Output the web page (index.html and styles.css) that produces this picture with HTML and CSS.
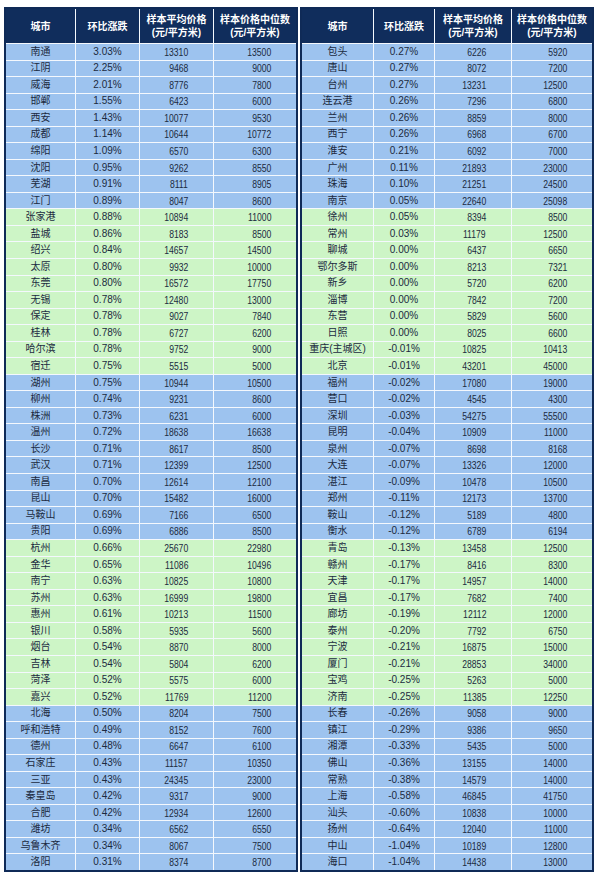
FILE: index.html
```html
<!DOCTYPE html>
<html lang="zh-CN">
<head>
<meta charset="utf-8">
<title>城市房价环比</title>
<link rel="stylesheet" href="styles.css">
</head>
<body>
<div class="page">
  <div class="tbl left">
    <div class="h">城市</div><div class="h">环比涨跌</div><div class="h">样本平均价格<br>(元/平方米)</div><div class="h">样本价格中位数<br>(元/平方米)</div>
    <div class="r b"><div>南通</div><div>3.03%</div><div class="n"><span>13310</span></div><div class="n"><span>13500</span></div></div>
    <div class="r b"><div>江阴</div><div>2.25%</div><div class="n"><span>9468</span></div><div class="n"><span>9000</span></div></div>
    <div class="r b"><div>威海</div><div>2.01%</div><div class="n"><span>8776</span></div><div class="n"><span>7800</span></div></div>
    <div class="r b"><div>邯郸</div><div>1.55%</div><div class="n"><span>6423</span></div><div class="n"><span>6000</span></div></div>
    <div class="r b"><div>西安</div><div>1.43%</div><div class="n"><span>10077</span></div><div class="n"><span>9530</span></div></div>
    <div class="r b"><div>成都</div><div>1.14%</div><div class="n"><span>10644</span></div><div class="n"><span>10772</span></div></div>
    <div class="r b"><div>绵阳</div><div>1.09%</div><div class="n"><span>6570</span></div><div class="n"><span>6300</span></div></div>
    <div class="r b"><div>沈阳</div><div>0.95%</div><div class="n"><span>9262</span></div><div class="n"><span>8550</span></div></div>
    <div class="r b"><div>芜湖</div><div>0.91%</div><div class="n"><span>8111</span></div><div class="n"><span>8905</span></div></div>
    <div class="r b"><div>江门</div><div>0.89%</div><div class="n"><span>8047</span></div><div class="n"><span>8600</span></div></div>
    <div class="r g"><div>张家港</div><div>0.88%</div><div class="n"><span>10894</span></div><div class="n"><span>11000</span></div></div>
    <div class="r g"><div>盐城</div><div>0.86%</div><div class="n"><span>8183</span></div><div class="n"><span>8500</span></div></div>
    <div class="r g"><div>绍兴</div><div>0.84%</div><div class="n"><span>14657</span></div><div class="n"><span>14500</span></div></div>
    <div class="r g"><div>太原</div><div>0.80%</div><div class="n"><span>9932</span></div><div class="n"><span>10000</span></div></div>
    <div class="r g"><div>东莞</div><div>0.80%</div><div class="n"><span>16572</span></div><div class="n"><span>17750</span></div></div>
    <div class="r g"><div>无锡</div><div>0.78%</div><div class="n"><span>12480</span></div><div class="n"><span>13000</span></div></div>
    <div class="r g"><div>保定</div><div>0.78%</div><div class="n"><span>9027</span></div><div class="n"><span>7840</span></div></div>
    <div class="r g"><div>桂林</div><div>0.78%</div><div class="n"><span>6727</span></div><div class="n"><span>6200</span></div></div>
    <div class="r g"><div>哈尔滨</div><div>0.78%</div><div class="n"><span>9752</span></div><div class="n"><span>9000</span></div></div>
    <div class="r g"><div>宿迁</div><div>0.75%</div><div class="n"><span>5515</span></div><div class="n"><span>5000</span></div></div>
    <div class="r b"><div>湖州</div><div>0.75%</div><div class="n"><span>10944</span></div><div class="n"><span>10500</span></div></div>
    <div class="r b"><div>柳州</div><div>0.74%</div><div class="n"><span>9231</span></div><div class="n"><span>8600</span></div></div>
    <div class="r b"><div>株洲</div><div>0.73%</div><div class="n"><span>6231</span></div><div class="n"><span>6000</span></div></div>
    <div class="r b"><div>温州</div><div>0.72%</div><div class="n"><span>18638</span></div><div class="n"><span>16638</span></div></div>
    <div class="r b"><div>长沙</div><div>0.71%</div><div class="n"><span>8617</span></div><div class="n"><span>8500</span></div></div>
    <div class="r b"><div>武汉</div><div>0.71%</div><div class="n"><span>12399</span></div><div class="n"><span>12500</span></div></div>
    <div class="r b"><div>南昌</div><div>0.70%</div><div class="n"><span>12614</span></div><div class="n"><span>12100</span></div></div>
    <div class="r b"><div>昆山</div><div>0.70%</div><div class="n"><span>15482</span></div><div class="n"><span>16000</span></div></div>
    <div class="r b"><div>马鞍山</div><div>0.69%</div><div class="n"><span>7166</span></div><div class="n"><span>6500</span></div></div>
    <div class="r b"><div>贵阳</div><div>0.69%</div><div class="n"><span>6886</span></div><div class="n"><span>8500</span></div></div>
    <div class="r g"><div>杭州</div><div>0.66%</div><div class="n"><span>25670</span></div><div class="n"><span>22980</span></div></div>
    <div class="r g"><div>金华</div><div>0.65%</div><div class="n"><span>11086</span></div><div class="n"><span>10496</span></div></div>
    <div class="r g"><div>南宁</div><div>0.63%</div><div class="n"><span>10825</span></div><div class="n"><span>10800</span></div></div>
    <div class="r g"><div>苏州</div><div>0.63%</div><div class="n"><span>16999</span></div><div class="n"><span>19800</span></div></div>
    <div class="r g"><div>惠州</div><div>0.61%</div><div class="n"><span>10213</span></div><div class="n"><span>11500</span></div></div>
    <div class="r g"><div>银川</div><div>0.58%</div><div class="n"><span>5935</span></div><div class="n"><span>5600</span></div></div>
    <div class="r g"><div>烟台</div><div>0.54%</div><div class="n"><span>8870</span></div><div class="n"><span>8000</span></div></div>
    <div class="r g"><div>吉林</div><div>0.54%</div><div class="n"><span>5804</span></div><div class="n"><span>6200</span></div></div>
    <div class="r g"><div>菏泽</div><div>0.52%</div><div class="n"><span>5575</span></div><div class="n"><span>6000</span></div></div>
    <div class="r g"><div>嘉兴</div><div>0.52%</div><div class="n"><span>11769</span></div><div class="n"><span>11200</span></div></div>
    <div class="r b"><div>北海</div><div>0.50%</div><div class="n"><span>8204</span></div><div class="n"><span>7500</span></div></div>
    <div class="r b"><div>呼和浩特</div><div>0.49%</div><div class="n"><span>8152</span></div><div class="n"><span>7600</span></div></div>
    <div class="r b"><div>德州</div><div>0.48%</div><div class="n"><span>6647</span></div><div class="n"><span>6100</span></div></div>
    <div class="r b"><div>石家庄</div><div>0.43%</div><div class="n"><span>11157</span></div><div class="n"><span>10350</span></div></div>
    <div class="r b"><div>三亚</div><div>0.43%</div><div class="n"><span>24345</span></div><div class="n"><span>23000</span></div></div>
    <div class="r b"><div>秦皇岛</div><div>0.42%</div><div class="n"><span>9317</span></div><div class="n"><span>9000</span></div></div>
    <div class="r b"><div>合肥</div><div>0.42%</div><div class="n"><span>12934</span></div><div class="n"><span>12600</span></div></div>
    <div class="r b"><div>潍坊</div><div>0.34%</div><div class="n"><span>6562</span></div><div class="n"><span>6550</span></div></div>
    <div class="r b"><div>乌鲁木齐</div><div>0.34%</div><div class="n"><span>8067</span></div><div class="n"><span>7500</span></div></div>
    <div class="r b"><div>洛阳</div><div>0.31%</div><div class="n"><span>8374</span></div><div class="n"><span>8700</span></div></div>
  </div>
  <div class="tbl right">
    <div class="h">城市</div><div class="h">环比涨跌</div><div class="h">样本平均价格<br>(元/平方米)</div><div class="h">样本价格中位数<br>(元/平方米)</div>
    <div class="r b"><div>包头</div><div>0.27%</div><div class="n"><span>6226</span></div><div class="n"><span>5920</span></div></div>
    <div class="r b"><div>唐山</div><div>0.27%</div><div class="n"><span>8072</span></div><div class="n"><span>7200</span></div></div>
    <div class="r b"><div>台州</div><div>0.27%</div><div class="n"><span>13231</span></div><div class="n"><span>12500</span></div></div>
    <div class="r b"><div>连云港</div><div>0.26%</div><div class="n"><span>7296</span></div><div class="n"><span>6800</span></div></div>
    <div class="r b"><div>兰州</div><div>0.26%</div><div class="n"><span>8859</span></div><div class="n"><span>8000</span></div></div>
    <div class="r b"><div>西宁</div><div>0.26%</div><div class="n"><span>6968</span></div><div class="n"><span>6700</span></div></div>
    <div class="r b"><div>淮安</div><div>0.21%</div><div class="n"><span>6092</span></div><div class="n"><span>7000</span></div></div>
    <div class="r b"><div>广州</div><div>0.11%</div><div class="n"><span>21893</span></div><div class="n"><span>23000</span></div></div>
    <div class="r b"><div>珠海</div><div>0.10%</div><div class="n"><span>21251</span></div><div class="n"><span>24500</span></div></div>
    <div class="r b"><div>南京</div><div>0.05%</div><div class="n"><span>22640</span></div><div class="n"><span>25098</span></div></div>
    <div class="r g"><div>徐州</div><div>0.05%</div><div class="n"><span>8394</span></div><div class="n"><span>8500</span></div></div>
    <div class="r g"><div>常州</div><div>0.03%</div><div class="n"><span>11179</span></div><div class="n"><span>12500</span></div></div>
    <div class="r g"><div>聊城</div><div>0.00%</div><div class="n"><span>6437</span></div><div class="n"><span>6650</span></div></div>
    <div class="r g"><div>鄂尔多斯</div><div>0.00%</div><div class="n"><span>8213</span></div><div class="n"><span>7321</span></div></div>
    <div class="r g"><div>新乡</div><div>0.00%</div><div class="n"><span>5720</span></div><div class="n"><span>6200</span></div></div>
    <div class="r g"><div>淄博</div><div>0.00%</div><div class="n"><span>7842</span></div><div class="n"><span>7200</span></div></div>
    <div class="r g"><div>东营</div><div>0.00%</div><div class="n"><span>5829</span></div><div class="n"><span>5600</span></div></div>
    <div class="r g"><div>日照</div><div>0.00%</div><div class="n"><span>8025</span></div><div class="n"><span>6600</span></div></div>
    <div class="r g"><div>重庆(主城区)</div><div>-0.01%</div><div class="n"><span>10825</span></div><div class="n"><span>10413</span></div></div>
    <div class="r g"><div>北京</div><div>-0.01%</div><div class="n"><span>43201</span></div><div class="n"><span>45000</span></div></div>
    <div class="r b"><div>福州</div><div>-0.02%</div><div class="n"><span>17080</span></div><div class="n"><span>19000</span></div></div>
    <div class="r b"><div>营口</div><div>-0.02%</div><div class="n"><span>4545</span></div><div class="n"><span>4300</span></div></div>
    <div class="r b"><div>深圳</div><div>-0.03%</div><div class="n"><span>54275</span></div><div class="n"><span>55500</span></div></div>
    <div class="r b"><div>昆明</div><div>-0.04%</div><div class="n"><span>10909</span></div><div class="n"><span>11000</span></div></div>
    <div class="r b"><div>泉州</div><div>-0.07%</div><div class="n"><span>8698</span></div><div class="n"><span>8168</span></div></div>
    <div class="r b"><div>大连</div><div>-0.07%</div><div class="n"><span>13326</span></div><div class="n"><span>12000</span></div></div>
    <div class="r b"><div>湛江</div><div>-0.09%</div><div class="n"><span>10478</span></div><div class="n"><span>10500</span></div></div>
    <div class="r b"><div>郑州</div><div>-0.11%</div><div class="n"><span>12173</span></div><div class="n"><span>13700</span></div></div>
    <div class="r b"><div>鞍山</div><div>-0.12%</div><div class="n"><span>5189</span></div><div class="n"><span>4800</span></div></div>
    <div class="r b"><div>衡水</div><div>-0.12%</div><div class="n"><span>6789</span></div><div class="n"><span>6194</span></div></div>
    <div class="r g"><div>青岛</div><div>-0.13%</div><div class="n"><span>13458</span></div><div class="n"><span>12500</span></div></div>
    <div class="r g"><div>赣州</div><div>-0.17%</div><div class="n"><span>8416</span></div><div class="n"><span>8300</span></div></div>
    <div class="r g"><div>天津</div><div>-0.17%</div><div class="n"><span>14957</span></div><div class="n"><span>14000</span></div></div>
    <div class="r g"><div>宜昌</div><div>-0.17%</div><div class="n"><span>7682</span></div><div class="n"><span>7400</span></div></div>
    <div class="r g"><div>廊坊</div><div>-0.19%</div><div class="n"><span>12112</span></div><div class="n"><span>12000</span></div></div>
    <div class="r g"><div>泰州</div><div>-0.20%</div><div class="n"><span>7792</span></div><div class="n"><span>6750</span></div></div>
    <div class="r g"><div>宁波</div><div>-0.21%</div><div class="n"><span>16875</span></div><div class="n"><span>15000</span></div></div>
    <div class="r g"><div>厦门</div><div>-0.21%</div><div class="n"><span>28853</span></div><div class="n"><span>34000</span></div></div>
    <div class="r g"><div>宝鸡</div><div>-0.25%</div><div class="n"><span>5263</span></div><div class="n"><span>5000</span></div></div>
    <div class="r g"><div>济南</div><div>-0.25%</div><div class="n"><span>11385</span></div><div class="n"><span>12250</span></div></div>
    <div class="r b"><div>长春</div><div>-0.26%</div><div class="n"><span>9058</span></div><div class="n"><span>9000</span></div></div>
    <div class="r b"><div>镇江</div><div>-0.29%</div><div class="n"><span>9386</span></div><div class="n"><span>9650</span></div></div>
    <div class="r b"><div>湘潭</div><div>-0.33%</div><div class="n"><span>5435</span></div><div class="n"><span>5000</span></div></div>
    <div class="r b"><div>佛山</div><div>-0.36%</div><div class="n"><span>13155</span></div><div class="n"><span>14000</span></div></div>
    <div class="r b"><div>常熟</div><div>-0.38%</div><div class="n"><span>14579</span></div><div class="n"><span>14000</span></div></div>
    <div class="r b"><div>上海</div><div>-0.58%</div><div class="n"><span>46845</span></div><div class="n"><span>41750</span></div></div>
    <div class="r b"><div>汕头</div><div>-0.60%</div><div class="n"><span>10838</span></div><div class="n"><span>10000</span></div></div>
    <div class="r b"><div>扬州</div><div>-0.64%</div><div class="n"><span>12040</span></div><div class="n"><span>11000</span></div></div>
    <div class="r b"><div>中山</div><div>-1.04%</div><div class="n"><span>10189</span></div><div class="n"><span>12800</span></div></div>
    <div class="r b"><div>海口</div><div>-1.04%</div><div class="n"><span>14438</span></div><div class="n"><span>13000</span></div></div>
  </div>
</div>
</body>
</html>
```
FILE: styles.css
```css
html, body {
  margin: 0;
  padding: 0;
  background: #ffffff;
}
body {
  font-family: "Liberation Sans", "Noto Sans CJK SC", sans-serif;
  color: #1b2a40;
}
.page {
  display: flex;
  gap: 2px;
  padding: 7px 0 0 4px;
}
.tbl {
  display: grid;
  grid-template-rows: 34px repeat(50, 1fr);
  gap: 1px;
  width: 294px;
  height: 865px;
  box-sizing: border-box;
  border: 2px solid #0f2a57;
  background: #f4f8fd;
}
.left {
  grid-template-columns: 69px 63px 73px 82px;
}
.right {
  grid-template-columns: 71px 60px 76px 80px;
}
.h {
  background: #102d5c;
  color: #ffffff;
  font-weight: bold;
  font-size: 10px;
  line-height: 13px;
  display: flex;
  align-items: center;
  justify-content: center;
  text-align: center;
  white-space: nowrap;
}
.r {
  display: contents;
}
.r > div {
  display: flex;
  align-items: center;
  justify-content: center;
  font-size: 10px;
  line-height: 12px;
  white-space: nowrap;
  overflow: hidden;
}
.b > div {
  background: #9dc3ef;
}
.g > div {
  background: #cdf5c6;
}
.r > .n {
  justify-content: flex-end;
  padding-right: 25px;
  font-size: 10.5px;
}
.n span {
  display: inline-block;
  transform: scaleX(0.82);
  transform-origin: right center;
}
```
